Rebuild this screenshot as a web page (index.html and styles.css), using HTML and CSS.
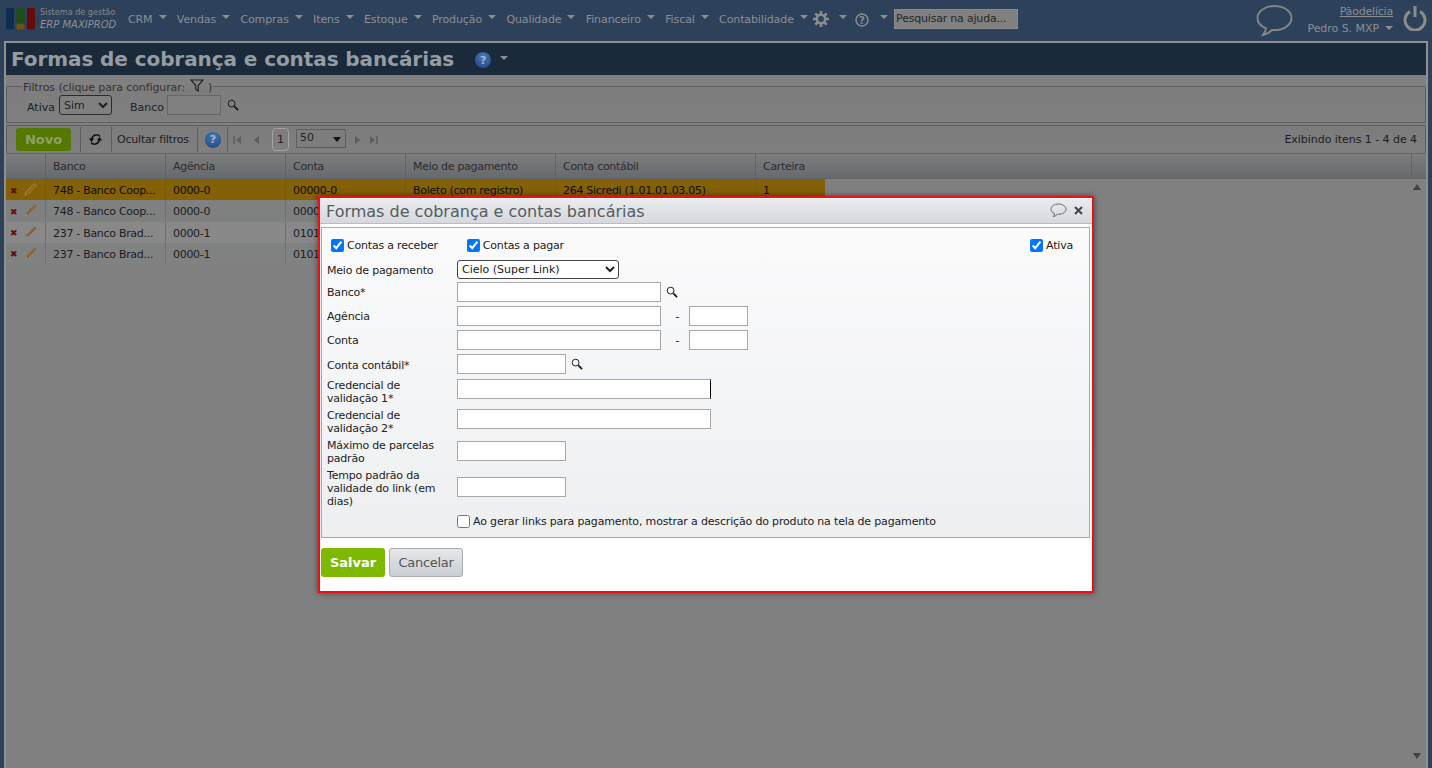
FILE: index.html
```html
<!DOCTYPE html>
<html lang="pt-BR">
<head>
<meta charset="utf-8">
<title>Formas de cobrança e contas bancárias</title>
<link rel="stylesheet" href="styles.css">
</head>
<body>
<header class="nav">
  <div class="brand">
    <svg class="logo" width="30" height="22" viewBox="0 0 30 22"><rect x="0" y="0" width="8" height="21.5" rx="1.5" fill="#0f2d52"/><rect x="10.5" y="0" width="8" height="15" rx="1.5" fill="#1d4f14"/><rect x="10.5" y="16" width="8" height="5.5" rx="1.5" fill="#75520f"/><rect x="21" y="0" width="8" height="21.5" rx="1.5" fill="#680a0c"/></svg>
    <div class="brand-text"><div class="brand-top">Sistema de gestão</div><div class="brand-name">ERP MAXIPROD</div></div>
  </div>
  <nav class="menu">
    <span class="mi">CRM<i class="arr"></i></span>
    <span class="mi">Vendas<i class="arr"></i></span>
    <span class="mi">Compras<i class="arr"></i></span>
    <span class="mi">Itens<i class="arr"></i></span>
    <span class="mi">Estoque<i class="arr"></i></span>
    <span class="mi">Produção<i class="arr"></i></span>
    <span class="mi">Qualidade<i class="arr"></i></span>
    <span class="mi">Financeiro<i class="arr"></i></span>
    <span class="mi">Fiscal<i class="arr"></i></span>
    <span class="mi">Contabilidade<i class="arr"></i></span>
  </nav>
  <svg class="gear" width="16" height="16" viewBox="0 0 16 16"><g fill="none" stroke="#8b8d8b"><circle cx="8" cy="8" r="4.2" stroke-width="2.6"/><path stroke-width="2.6" d="M8 0v3M8 13v3M0 8h3M13 8h3M2.3 2.3l2.2 2.2M11.5 11.5l2.2 2.2M13.7 2.3l-2.2 2.2M4.5 11.5l-2.2 2.2"/></g></svg>
  <i class="arr arr-gear"></i>
  <svg class="help" width="14" height="14" viewBox="0 0 14 14"><circle cx="7" cy="7" r="6" fill="none" stroke="#8b8d8b" stroke-width="1.5"/><text x="7" y="10.5" text-anchor="middle" class="help-q">?</text></svg>
  <i class="arr arr-help"></i>
  <div class="search">Pesquisar na ajuda...</div>
  <div class="nav-right">
    <svg class="bubble" width="37" height="33" viewBox="0 0 37 33"><path d="M18.5 2C9 2 1.5 7.300 1.500 14c0 4.500 3.500 8.300 8.500 10.200-.3 2.500-1 4.500-3 6.800 3.500-.6 7-2.800 9-5 .8.100 1.700.100 2.500.100 9.500 0 17-5.400 17-12.100S28 2 18.500 2z" fill="none" stroke="#7f8587" stroke-width="2"/></svg>
    <div class="user"><div class="company">Pãodelícia</div><div class="uname">Pedro S. MXP<i class="arr arr-user"></i></div></div>
    <svg class="power" width="24" height="26" viewBox="0 0 24 26"><path d="M7 6.500a10 10 0 1 0 10 0" fill="none" stroke="#8b8d8b" stroke-width="3"/><path d="M12 1v11" stroke="#8b8d8b" stroke-width="3"/></svg>
  </div>
</header>

<main class="main">
  <div class="title-bar">
    <h1>Formas de cobrança e contas bancárias</h1>
    <span class="help-blue"><b>?</b></span>
    <i class="arr arr-title"></i>
  </div>

  <fieldset class="filters">
    <legend>Filtros (clique para configurar: <svg class="funnel" width="14" height="13" viewBox="0 0 14 13"><path d="M1 1h12L8.300 6.500V12L5.700 10.500V6.500z" fill="none" stroke="#222" stroke-width="1.200"/></svg> )</legend>
    <div class="filter-row">
      <label class="f-ativa">Ativa</label>
      <select class="f-select"><option>Sim</option></select>
      <label class="f-banco">Banco</label>
      <input class="f-input" type="text">
      <svg class="mag" width="12" height="12" viewBox="0 0 13 13"><circle cx="5" cy="5" r="3.700" fill="none" stroke="#111" stroke-width="1"/><path d="M8 8l4 4" stroke="#111" stroke-width="1.800"/></svg>
    </div>
  </fieldset>

  <div class="toolbar">
    <button class="novo">Novo</button>
    <span class="sep sep-a"></span>
    <svg class="refresh" width="15" height="13" viewBox="0 0 15 13"><path d="M12 3.500C10 1 5 1 3.500 6" fill="none" stroke="#111" stroke-width="1.500"/><path d="M.8 5.500h5.400L3.500 9z" fill="#111"/><path d="M3 9.500C5 12 10 12 11.500 7" fill="none" stroke="#111" stroke-width="1.500"/><path d="M8.800 7.500h5.400L11.500 4z" fill="#111"/></svg>
    <span class="sep sep-b"></span>
    <span class="hide-f">Ocultar filtros</span>
    <span class="sep sep-c"></span>
    <span class="help-blue help-tool"><b>?</b></span>
    <span class="sep sep-d"></span>
    <svg class="pg pg-first" width="9" height="10" viewBox="0 0 9 10"><path d="M1 1v8" stroke="#5d5d5d" stroke-width="1.500"/><path d="M8 1v8L3 5z" fill="#5d5d5d"/></svg>
    <svg class="pg pg-prev" width="8" height="10" viewBox="0 0 8 10"><path d="M7 1v8L2 5z" fill="#5d5d5d"/></svg>
    <span class="page-no">1</span>
    <span class="page-size">50<i class="dark-arr"></i></span>
    <svg class="pg pg-next" width="8" height="10" viewBox="0 0 8 10"><path d="M1 1v8l5-4z" fill="#5d5d5d"/></svg>
    <svg class="pg pg-last" width="9" height="10" viewBox="0 0 9 10"><path d="M1 1v8l5-4z" fill="#5d5d5d"/><path d="M8 1v8" stroke="#5d5d5d" stroke-width="1.500"/></svg>
    <span class="count">Exibindo itens 1 - 4 de 4</span>
  </div>

  <section class="grid">
    <div class="g-head">
      <div class="c c0"></div><div class="c c1">Banco</div><div class="c c2">Agência</div><div class="c c3">Conta</div><div class="c c4">Meio de pagamento</div><div class="c c5">Conta contábil</div><div class="c c6 fill">Carteira</div><div class="c c7"></div>
    </div>
    <div class="g-body">
      <div class="row sel">
        <div class="c c0"><span class="x">✖</span><svg class="pen" width="15" height="15" viewBox="0 0 16 16"><path d="M2 14.500 3 11 12.500 1.500l2 2L5 13z" fill="#8a6620" stroke="#a08850" stroke-width=".9"/></svg></div>
        <div class="c c1">748 - Banco Coop...</div><div class="c c2">0000-0</div><div class="c c3">00000-0</div><div class="c c4">Boleto (com registro)</div><div class="c c5">264 Sicredi (1.01.01.03.05)</div><div class="c c6">1</div>
      </div>
      <div class="row r2">
        <div class="c c0"><span class="x">✖</span><svg class="pen" width="15" height="15" viewBox="0 0 16 16"><path d="M2 14.500 3 11 12.500 1.500l2 2L5 13z" fill="#8c6436"/><path d="M2 14.500 3 11l2 2z" fill="#a08f70"/></svg></div>
        <div class="c c1">748 - Banco Coop...</div><div class="c c2">0000-0</div><div class="c c3">00000-0</div>
      </div>
      <div class="row r3">
        <div class="c c0"><span class="x">✖</span><svg class="pen" width="15" height="15" viewBox="0 0 16 16"><path d="M2 14.500 3 11 12.500 1.500l2 2L5 13z" fill="#8c6436"/><path d="M2 14.500 3 11l2 2z" fill="#a08f70"/></svg></div>
        <div class="c c1">237 - Banco Brad...</div><div class="c c2">0000-1</div><div class="c c3">01010-1</div>
      </div>
      <div class="row r4">
        <div class="c c0"><span class="x">✖</span><svg class="pen" width="15" height="15" viewBox="0 0 16 16"><path d="M2 14.500 3 11 12.500 1.500l2 2L5 13z" fill="#8c6436"/><path d="M2 14.500 3 11l2 2z" fill="#a08f70"/></svg></div>
        <div class="c c1">237 - Banco Brad...</div><div class="c c2">0000-1</div><div class="c c3">01010-1</div>
      </div>
      <i class="sb sb-up"></i>
      <i class="sb sb-down"></i>
    </div>
  </section>
</main>

<div class="modal">
  <div class="m-head">
    <span class="m-title">Formas de cobrança e contas bancárias</span>
    <svg class="m-chat" width="17" height="15" viewBox="0 0 17 15"><path d="M8.500 1C4.400 1 1 3.300 1 6.200c0 1.900 1.400 3.500 3.500 4.400 0 1.100-.4 2-1.200 3 1.600-.3 3-1.200 4-2.300h1.200c4.100 0 7.500-2.300 7.500-5.100S12.600 1 8.500 1z" fill="none" stroke="#666" stroke-width="1"/></svg>
    <svg class="m-x" width="9" height="9" viewBox="0 0 9 9"><path d="M1 1l7 7M8 1l-7 7" stroke="#444" stroke-width="2"/></svg>
  </div>
  <div class="m-panel">
    <div class="checks">
      <label class="chk chk-a"><input type="checkbox" checked>Contas a receber</label>
      <label class="chk chk-b"><input type="checkbox" checked>Contas a pagar</label>
      <label class="chk chk-c"><input type="checkbox" checked>Ativa</label>
    </div>
    <div class="fr fr-select"><label>Meio de pagamento</label><select class="m-select"><option>Cielo (Super Link)</option></select></div>
    <div class="fr"><label>Banco*</label><input class="w204" type="text"><svg class="mag m-mag" width="12" height="12" viewBox="0 0 13 13"><circle cx="5" cy="5" r="3.700" fill="none" stroke="#111" stroke-width="1"/><path d="M8 8l4 4" stroke="#111" stroke-width="1.800"/></svg></div>
    <div class="fr"><label>Agência</label><input class="w204" type="text"><span class="dash">-</span><input class="w59" type="text"></div>
    <div class="fr"><label>Conta</label><input class="w204" type="text"><span class="dash">-</span><input class="w59" type="text"></div>
    <div class="fr fr-cc"><label>Conta contábil*</label><input class="w109" type="text"><svg class="mag m-mag" width="12" height="12" viewBox="0 0 13 13"><circle cx="5" cy="5" r="3.700" fill="none" stroke="#111" stroke-width="1"/><path d="M8 8l4 4" stroke="#111" stroke-width="1.800"/></svg></div>
    <div class="fr fr-tall"><label>Credencial de<br>validação 1*</label><input class="w254 caret" type="text"></div>
    <div class="fr fr-tall"><label>Credencial de<br>validação 2*</label><input class="w254" type="text"></div>
    <div class="fr fr-tall fr-max"><label>Máximo de parcelas<br>padrão</label><input class="w109" type="text"></div>
    <div class="fr fr-tall fr-tempo"><label>Tempo padrão da<br>validade do link (em<br>dias)</label><input class="w109" type="text"></div>
    <div class="fr fr-last"><label></label><label class="chk chk-d"><input type="checkbox">Ao gerar links para pagamento, mostrar a descrição do produto na tela de pagamento</label></div>
  </div>
  <div class="m-actions">
    <button class="salvar">Salvar</button>
    <button class="cancelar">Cancelar</button>
  </div>
</div>
</body>
</html>
```

FILE: styles.css
```css
* { box-sizing: border-box; }
html, body { height: 100%; }
body {
  margin: 0;
  background: #2e415b;
  font-family: "DejaVu Sans", sans-serif;
  font-size: 11px;
  color: #1f1f1f;
  overflow: hidden;
  position: relative;
}
i { display: block; font-style: normal; }

.arr {
  width: 0; height: 0;
  border-left: 4px solid transparent;
  border-right: 4px solid transparent;
  border-top: 4px solid #8b8f92;
}

/* Nav */
.nav { height: 41px; display: flex; align-items: flex-start; color: #8b8f92; }
.brand { display: flex; width: 128px; padding: 8px 0 0 6px; flex: none; }
.logo { flex: none; }
.brand-text { margin-left: 4px; margin-top: -1px; }
.brand-top { font-size: 8.100px; line-height: 11px; color: #85898c; white-space: nowrap; }
.brand-name { font-size: 10px; line-height: 13px; font-style: italic; color: #8b9094; white-space: nowrap; }
.menu { display: flex; padding-top: 13px; }
.mi { display: flex; font-size: 11px; line-height: 14px; margin-right: 10.300px; white-space: nowrap; letter-spacing: -.1px; }
.mi .arr { margin: 2px 0 0 6px; }
.gear { margin: 11px 0 0 -5px; flex: none; }
.arr-gear { margin: 15px 0 0 10px; flex: none; }
.help { margin: 13px 0 0 8px; flex: none; }
.help-q { font-size: 10px; font-weight: bold; fill: #8b8d8b; font-family: "DejaVu Sans", sans-serif; }
.arr-help { margin: 15px 0 0 11px; flex: none; }
.search {
  margin: 9px 0 0 6px; width: 124px; height: 20px; flex: none;
  background: #808080; border: 1px solid #8b8b8b; color: #272727;
  font-size: 11px; line-height: 18px; padding-left: 1px; white-space: nowrap; letter-spacing: -.2px;
}
.nav-right { margin-left: auto; display: flex; align-items: flex-start; padding-right: 5px; }
.bubble { margin: 4px 0 0 0; flex: none; }
.user { width: 87px; margin-left: 13px; text-align: right; white-space: nowrap; }
.company { margin-top: 5px; font-size: 11px; line-height: 14px; text-decoration: underline; letter-spacing: -.2px; }
.uname { margin-top: 3px; margin-left: -20px; font-size: 11px; line-height: 14px; display: flex; justify-content: flex-end; letter-spacing: -.05px; }
.arr-user { margin: 4px 0 0 6px; }
.power { margin: 5px 0 0 10px; flex: none; }

/* Main */
.main {
  margin: 0 4px;
  height: 727px;
  background: #808080;
  border: 2px solid #8d8f90;
  border-bottom: 0;
  display: flex;
  flex-direction: column;
}
.title-bar { height: 32px; background: #1b2a3b; display: flex; align-items: center; flex: none; padding-left: 5px; }
h1 { margin: 0; font-size: 20px; font-weight: bold; color: #959ca2; white-space: nowrap; letter-spacing: -.08px; }
.help-blue {
  width: 16px; height: 16px; border-radius: 50%;
  background: radial-gradient(circle at 50% 30%, #4a78b8, #1a427f);
  color: #a8b4c8; display: flex; align-items: center; justify-content: center;
  font-size: 11px; flex: none;
}
.help-blue b { font-weight: bold; }
.title-bar .help-blue { margin: 2px 0 0 21px; }
.arr-title { margin: -3px 0 0 9px; }

.filters {
  margin: 4px 0 0 0; padding: 0 0 0 20px; height: 44px; flex: none;
  border: 1px solid #5f5f5f;
  background: linear-gradient(#7d7d7d, #7f7f7f);
  min-width: 0;
}
.filters legend { padding: 0 1px; margin-left: -5px; font-size: 11px; line-height: 13px; color: #333; letter-spacing: -.1px; }
.funnel { vertical-align: -1px; margin-left: 2px; }
.filter-row { display: flex; align-items: center; height: 20px; margin-top: 1px; }
.f-ativa { width: 32px; font-size: 11px; color: #1f1f1f; margin-top: 5px; }
.f-select { width: 53px; height: 20px; background: #808080; border: 1px solid #2b2b2b; border-radius: 3px; font: 11px "DejaVu Sans", sans-serif; color: #1f1f1f; padding: 0; }
.f-banco { margin-left: 18px; width: 37px; font-size: 11px; margin-top: 5px; }
.f-input { width: 54px; height: 20px; background: #808080; border: 1px solid #666; }
.mag { flex: none; }
.filter-row .mag { margin-left: 6px; }

.toolbar {
  margin-top: 2px; height: 28px; flex: none; position: relative;
  border: 1px solid #5f5f5f; border-width: 1px 1px 0 1px;
  background: linear-gradient(#7c7c7c, #7f7f7f);
  display: flex; align-items: center;
}
.novo {
  margin-left: 9px; width: 55px; height: 23px; flex: none;
  background: #557800; border: 0; border-radius: 3px;
  font: bold 13px "DejaVu Sans", sans-serif; color: #8f9f6a; padding: 0;
}
.sep { width: 1px; height: 25px; background: #5e5e5e; flex: none; }
.sep-a { margin-left: 9px; }
.refresh { margin-left: 7px; flex: none; }
.sep-b { margin-left: 8px; }
.hide-f { margin-left: 5px; width: 80px; white-space: nowrap; letter-spacing: -.2px; color: #1c1c1c; }
.sep-c { margin-left: 0; }
.help-tool { margin-left: 7px; }
.sep-d { margin-left: 6px; }
.pg { flex: none; }
.pg-first { margin-left: 5px; }
.pg-prev { margin-left: 10px; }
.page-no { margin-left: 12px; width: 17px; height: 23px; border: 1px solid #a2a2a2; border-radius: 4px; text-align: center; line-height: 22px; flex: none; color: #222; }
.page-size { margin-left: 7px; width: 50px; height: 19px; border: 1px solid #5e5e5e; background: #7d7d7d; position: relative; padding-left: 3px; line-height: 15px; flex: none; margin-top: -3px; color: #222; }
.dark-arr { position: absolute; right: 4px; top: 7px; width: 0; height: 0; border-left: 4px solid transparent; border-right: 4px solid transparent; border-top: 5px solid #111; }
.pg-next { margin-left: 8px; }
.pg-last { margin-left: 7px; }
.count { margin-left: auto; margin-right: 8px; white-space: nowrap; letter-spacing: -.05px; color: #1c1c1c; }

.grid { flex: 1; min-height: 0; display: flex; flex-direction: column; }
.g-head {
  height: 26px; flex: none; display: flex;
  background: linear-gradient(#7d7d7d, #666a6d);
  border-top: 1px solid #5f6366; border-bottom: 1px solid #5f6366;
}
.c { flex: none; height: 100%; padding-left: 7px; white-space: nowrap; border-right: 1px solid #5f6366; display: flex; align-items: center; letter-spacing: -.3px; }
.g-head .c { color: #2b2c2e; }
.c0 { width: 40px; padding-left: 0; }
.c1, .c2, .c3 { width: 120px; }
.c4 { width: 150px; }
.c5 { width: 200px; }
.c6 { width: 69px; border-right: 0; }
.g-head .fill { width: 656px; border-right: 1px solid #5f6366; }
.g-head .c7 { flex: 1; border-right: 0; }
.g-body { flex: 1; position: relative; }
.row { display: flex; height: 21.250px; width: fit-content; color: #1c1c1c; }
.row .c { border-right-color: #6f6f6f; padding-top: 2px; }
.row .c0 { padding-top: 0; }
.row .c3 { border-right: 0; }
.row.sel .c3 { border-right: 1px solid #6f5a20; }
.sel { background: #846006; color: #0f0d05; }
.sel .c { border-right-color: #6f5a20; }
.sel .c4 { border-right-color: #6f5a20; }
.r2 { background: #7f8181; width: 820px; }
.r3 { background: #888888; width: 820px; }
.r4 { background: #808282; width: 820px; }
.x { color: #5f0d12; font-size: 9px; margin-left: 4px; width: 9px; margin-top: 2px; }
.pen { margin-left: 4px; flex: none; }
.sb { position: absolute; right: 5px; width: 0; height: 0; border-left: 4px solid transparent; border-right: 4px solid transparent; }
.sb-up { top: 5px; border-bottom: 6px solid #414141; }
.sb-down { bottom: 9px; border-top: 6px solid #414141; }

/* Modal */
.modal {
  position: absolute; left: 318px; top: 196px; width: 776px; height: 397px;
  background: #fff; border: 2px solid #ee0f14;
  box-shadow: 0 0 6px rgba(0,0,0,.5);
}
.m-head {
  height: 25px; margin: 1px 0 0 0; padding-top: 1px; display: flex; align-items: center;
  background: linear-gradient(#e9ebee, #d6d8dd);
  border-bottom: 1px solid #b9bcc0; position: relative;
}
.m-title { margin-left: 6px; font-size: 16px; line-height: 20px; color: #555b60; white-space: nowrap; }
.m-chat { margin-left: auto; flex: none; margin-top: -3px; }
.m-x { margin: -3px 9px 0 7px; flex: none; }
.m-panel {
  margin: 3px 2px 0 1px; height: 311px;
  border: 1px solid #a8a8a8;
  background: linear-gradient(#fbfbfc, #edeff1);
  padding: 0 0 0 5px;
}
.checks { display: flex; height: 31px; align-items: flex-end; position: relative; padding-bottom: 0; }
.chk { display: flex; align-items: center; white-space: nowrap; letter-spacing: -.2px; color: #222; }
.chk input { margin: 0 3px 0 0; width: 13px; height: 13px; flex: none; }
.chk-a { margin-left: 4px; margin-bottom: 7px; }
.chk-b { margin-left: 29px; margin-bottom: 7px; }
.chk-c { margin-left: auto; margin-right: 16px; margin-bottom: 7px; }
.fr { display: flex; align-items: center; height: 20px; margin-bottom: 4px; }
.fr label:first-child { width: 130px; flex: none; line-height: 13px; letter-spacing: -.2px; color: #222; }
.fr input[type=text] { height: 20px; background: #fff; border: 1px solid #a8a8a8; padding: 0; flex: none; }
.fr-select { height: 20px; margin-bottom: 3px; }
.fr-select label:first-child, .fr-cc label:first-child { padding-top: 2px; }
.m-select { width: 162px; height: 19px; background: #fff; border: 1px solid #444; border-radius: 3px; font: 11px "DejaVu Sans", sans-serif; color: #222; padding: 0; }
.w204 { width: 204px; }
.w59 { width: 59px; }
.w109 { width: 109px; }
.w254 { width: 254px; }
.caret { border-right: 1px solid #000 !important; }
.dash { width: 28px; padding-left: 5px; text-align: center; flex: none; }
.m-mag { margin-left: 5px; }
.fr-cc { margin-bottom: 5px; }
.fr-tall { height: auto; align-items: flex-start; min-height: 26px; margin-bottom: 4px; }
.fr-max input[type=text] { margin-top: 2px; }
.fr-tempo input[type=text] { margin-top: 8px; }
.fr-last { margin-top: -1px; }
.chk-d { letter-spacing: -.165px; }
.chk-d input { margin-right: 3px; }
.m-actions { display: flex; padding: 10px 0 0 1px; gap: 4px; }
.salvar {
  width: 64px; height: 29px; border: 0; border-radius: 3px; background: #7fb800;
  font: bold 13px "DejaVu Sans", sans-serif; color: #fff; padding: 0;
}
.cancelar {
  width: 74px; height: 29px; border: 1px solid #a8acb0; border-radius: 3px;
  background: linear-gradient(#e6e8ea, #cbced2);
  font: 13px "DejaVu Sans", sans-serif; color: #555; padding: 0; letter-spacing: -.3px;
}
```
